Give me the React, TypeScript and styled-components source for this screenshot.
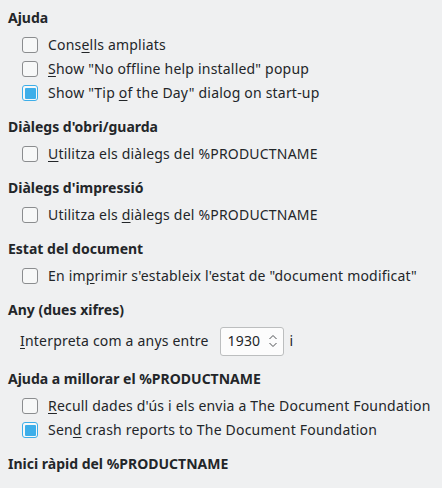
import React, {useState} from 'react';
import styled, {createGlobalStyle} from 'styled-components';

const GlobalStyle = createGlobalStyle`
  html, body {
    margin: 0;
    padding: 0;
    background: #eff0f1;
  }
  body {
    font-family: 'Noto Sans', 'DejaVu Sans', sans-serif;
    font-size: 14px;
    color: #232629;
  }
`;

type Option = {
  label: React.ReactNode;
  checked: boolean;
};

function Mn({children}: {children: string}) {
  return <Underline>{children}</Underline>;
}

function CheckRow({label, checked}: Option) {
  const [on, setOn] = useState(checked);
  return (
    <Row onClick={() => setOn(!on)}>
      <Box $checked={on}>{on && <Mark />}</Box>
      <Label>{label}</Label>
    </Row>
  );
}

function Section({title, children}: {title: string; children?: React.ReactNode}) {
  return (
    <SectionBox>
      <Heading>{title}</Heading>
      {children && <List>{children}</List>}
    </SectionBox>
  );
}

function SpinBox({value}: {value: number}) {
  return (
    <Spin>
      <SpinValue>{value}</SpinValue>
      <svg width="10" height="16" viewBox="0 0 10 16">
        <path d="M1.5 6 L5 2.5 L8.5 6" fill="none" stroke="#4d4f52" strokeWidth="1" />
        <path d="M1.5 10 L5 13.5 L8.5 10" fill="none" stroke="#4d4f52" strokeWidth="1" />
      </svg>
    </Spin>
  );
}

export default function App() {
  return (
    <>
      <GlobalStyle />
      <Page>
        <Section title="Ajuda">
          <CheckRow checked={false} label={<>Cons<Mn>e</Mn>lls ampliats</>} />
          <CheckRow checked={false} label={<><Mn>S</Mn>how "No offline help installed" popup</>} />
          <CheckRow checked label={<>Show "Tip <Mn>o</Mn>f the Day" dialog on start-up</>} />
        </Section>
        <Section title="Diàlegs d'obri/guarda">
          <CheckRow checked={false} label={<><Mn>U</Mn>tilitza els diàlegs del %PRODUCTNAME</>} />
        </Section>
        <Section title="Diàlegs d'impressió">
          <CheckRow checked={false} label={<>Utilitza els <Mn>d</Mn>iàlegs del %PRODUCTNAME</>} />
        </Section>
        <Section title="Estat del document">
          <CheckRow checked={false} label={<>En im<Mn>p</Mn>rimir s'estableix l'estat de "document modificat"</>} />
        </Section>
        <Section title="Any (dues xifres)">
          <YearRow>
            <Label><Mn>I</Mn>nterpreta com a anys entre</Label>
            <SpinBox value={1930} />
            <Label>i</Label>
          </YearRow>
        </Section>
        <Section title="Ajuda a millorar el %PRODUCTNAME">
          <CheckRow checked={false} label={<><Mn>R</Mn>ecull dades d'ús i els envia a The Document Foundation</>} />
          <CheckRow checked label={<>Sen<Mn>d</Mn> crash reports to The Document Foundation</>} />
        </Section>
        <Section title="Inici ràpid del %PRODUCTNAME" />
      </Page>
    </>
  );
}

const Page = styled.div`
  display: flex;
  flex-direction: column;
  gap: 12px;
  padding: 8px 8px 0 8px;
  height: 480px;
  overflow: hidden;
`;

const SectionBox = styled.section`
  display: flex;
  flex-direction: column;
  gap: 5px;
`;

const Heading = styled.div`
  font-weight: bold;
  line-height: 20px;
  height: 20px;
`;

const List = styled.div`
  display: flex;
  flex-direction: column;
  padding-left: 14px;
`;

const Row = styled.div`
  display: flex;
  align-items: center;
  gap: 10px;
  height: 24px;
  cursor: default;
  user-select: none;
`;

const Box = styled.span<{$checked: boolean}>`
  box-sizing: border-box;
  width: 16px;
  height: 16px;
  border-radius: 3px;
  border: 1px solid ${p => (p.$checked ? '#3daee9' : '#8b8d8f')};
  background: #f7f8f8;
  display: flex;
  align-items: center;
  justify-content: center;
  flex: none;
`;

const Mark = styled.span`
  width: 11px;
  height: 11px;
  border-radius: 1px;
  background: #3daee9;
`;

const Label = styled.span`
  white-space: nowrap;
  line-height: 20px;
  letter-spacing: 0.2px;
`;

const Underline = styled.span`
  text-decoration: underline;
  text-underline-offset: 2px;
`;

const YearRow = styled.div`
  display: flex;
  align-items: center;
  height: 32px;
  gap: 6px;
  margin-left: -2px;

  & > span:first-child {
    margin-right: 5px;
  }
`;

const Spin = styled.div`
  box-sizing: border-box;
  width: 64px;
  height: 29px;
  border: 1px solid #bcbebf;
  border-radius: 3px;
  background: #fcfcfc;
  display: flex;
  align-items: center;
  justify-content: space-between;
  padding: 0 5px 0 7px;
`;

const SpinValue = styled.span`
  line-height: 20px;
  letter-spacing: 0.2px;
`;
